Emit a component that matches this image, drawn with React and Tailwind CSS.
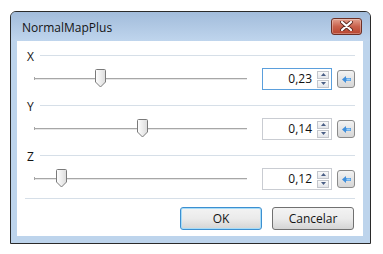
import React from 'react';

const rows = [
    { label: 'X', value: '0,23', thumb: 61, focused: true },
    { label: 'Y', value: '0,14', thumb: 103, focused: false },
    { label: 'Z', value: '0,12', thumb: 22, focused: false },
];

const CloseGlyph = () => (
    <svg width="13" height="10" viewBox="0 0 13 10">
        <path d="M2 1 L11 9 M11 1 L2 9" stroke="#5e2a22" strokeWidth="4" strokeLinecap="round" />
        <path d="M2 1 L11 9 M11 1 L2 9" stroke="#ffffff" strokeWidth="2.2" strokeLinecap="round" />
    </svg>
);

const Slider = ({ thumb }) => (
    <div className="relative w-[213px] h-[21px] flex items-center">
        <div className="w-full flex flex-col">
            <div className="h-px bg-[#a7a7a7]" />
            <div className="h-px bg-[#e7e7e7]" />
        </div>
        <div className="absolute left-0 top-[9px] w-px h-[3px] bg-[#a7a7a7]" />
        {/* thumb */}
        <svg className="absolute top-[1px]" style={{ left: thumb }} width="11" height="19" viewBox="0 0 11 19">
            <defs>
                <linearGradient id={`tg${thumb}`} x1="0" y1="0" x2="1" y2="0">
                    <stop offset="0" stopColor="#ffffff" />
                    <stop offset="1" stopColor="#dcdcdc" />
                </linearGradient>
            </defs>
            <path d="M1.5 0.5 H9.5 Q10.5 0.5 10.5 1.5 V13 L5.5 18 L0.5 13 V1.5 Q0.5 0.5 1.5 0.5 Z" fill={`url(#tg${thumb})`} stroke="#7a7a7a" />
        </svg>
    </div>
);

const Spin = () => (
    <div className="flex flex-col gap-px mr-[2px]">
        {[0, 1].map((i) => (
            <div key={i} className="w-[12px] h-[8px] border border-[#c3c6cc] bg-gradient-to-b from-[#fafafa] to-[#e4e6ea] flex items-center justify-center">
                <svg width="5" height="3" viewBox="0 0 5 3">
                    <path d={i === 0 ? 'M0 3 L2.5 0 L5 3 Z' : 'M0 0 L5 0 L2.5 3 Z'} fill="#4a5f86" />
                </svg>
            </div>
        ))}
    </div>
);

const ResetButton = () => (
    <div className="w-[18px] h-[18px] mt-[2px] rounded-[3px] border border-[#8a8a8a] bg-gradient-to-b from-[#f3f3f3] to-[#d6d6d6] flex items-center justify-center">
        <svg width="9" height="7" viewBox="0 0 9 7">
            <path d="M0 3.5 L4 0 V2 H9 V5 H4 V7 Z" fill="#3f8fdc" />
            <path d="M4.5 2.5 H8.5 V4.5 H4.5 Z" fill="#9fd0f7" />
        </svg>
    </div>
);

const Group = ({ label, value, thumb, focused }) => (
    <div className="flex flex-col">
        <div className="h-[12px] flex items-center pl-[2px]">
            <span className="text-[12px] leading-none text-[#141414] w-[13px] mt-[3px]">{label}</span>
            <div className="flex-1 h-px bg-[#d6dfe8]" />
        </div>
        <div className="mt-[7px] flex items-start h-[22px]">
            <div className="ml-[9px]">
                <Slider thumb={thumb} />
            </div>
            <div className={`ml-[15px] w-[70px] h-[22px] flex items-center justify-end border ${focused ? 'border-[#5b9fdc]' : 'border-[#c9ccd2]'} bg-white`}>
                <span className="text-[12px] text-[#101010] mr-[5px]">{value}</span>
                <Spin />
            </div>
            <div className="ml-[5px]">
                <ResetButton />
            </div>
        </div>
    </div>
);

const Button = ({ children, primary }) => (
    <div className={`w-[82px] h-[23px] rounded-[3px] border ${primary ? 'border-[#3c8fd0]' : 'border-[#707070]'} bg-gradient-to-b from-[#f3f3f3] via-[#ebebeb] to-[#d4d4d4] flex items-center justify-center text-[12px] text-[#141414] ${primary ? 'shadow-[inset_0_0_0_1px_#a6dcf8]' : ''}`}>
        {children}
    </div>
);

export default function App() {
    return (
        <div className="w-[383px] h-[254px] bg-white pl-[10px] pt-[11px]" style={{ fontFamily: '"Open Sans", "Noto Sans", sans-serif' }}>
            <div className="w-[361px] h-[233px] border border-[#2a2a2a] rounded-t-[6px] bg-[#bdd4ec] flex flex-col overflow-hidden">
                <div className="h-[29px] flex items-center justify-between pl-[11px] pr-[8px] bg-gradient-to-b from-[#a2bcdb] to-[#bfd5ed]">
                    <span className="text-[12px] text-[#141414] mt-[2px]">NormalMapPlus</span>
                    <div className="w-[31px] h-[17px] mt-[-1px] rounded-[3px] border border-[#6d3026] bg-gradient-to-b from-[#e2a08f] via-[#c9624d] to-[#b8442e] flex items-center justify-center shadow-[inset_0_0_0_1px_rgba(255,255,255,0.3)]">
                        <CloseGlyph />
                    </div>
                </div>
                <div className="ml-[6px] mr-[7px] h-[195px] bg-white px-[8px] pt-[8px] flex flex-col">
                    <div className="flex flex-col gap-[9px]">
                        {rows.map((r) => (
                            <Group key={r.label} {...r} />
                        ))}
                    </div>
                    <div className="mt-[8px] h-px bg-[#d6dfe8]" />
                    <div className="mt-[8px] flex justify-end gap-[10px] pr-[1px]">
                        <Button primary>OK</Button>
                        <Button>Cancelar</Button>
                    </div>
                </div>
            </div>
        </div>
    );
}
